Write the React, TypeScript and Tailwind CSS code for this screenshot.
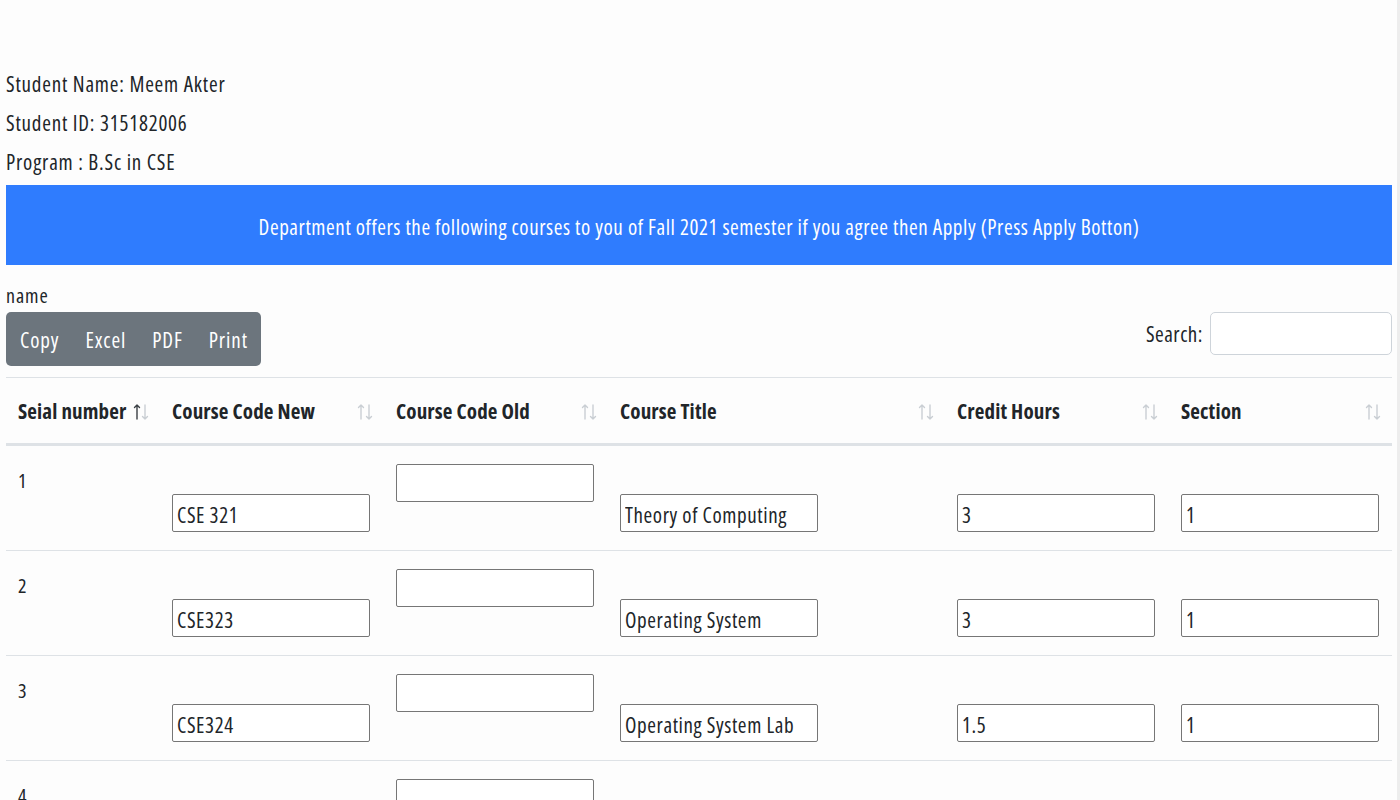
import React from "react";

type Row = { n: string; newCode: string; title: string; credit: string; section: string };

const rows: Row[] = [
  { n: "1", newCode: "CSE 321", title: "Theory of Computing", credit: "3", section: "1" },
  { n: "2", newCode: "CSE323", title: "Operating System", credit: "3", section: "1" },
  { n: "3", newCode: "CSE324", title: "Operating System Lab", credit: "1.5", section: "1" },
  { n: "4", newCode: "CSE325", title: "Computer Networks", credit: "3", section: "1" },
];

function SortIcon({ active }: { active?: boolean }) {
  return (
    <svg width="18" height="20" viewBox="0 0 18 20" className="shrink-0">
      <g strokeWidth="1.4" fill="none" strokeLinecap="round" strokeLinejoin="round">
        <path d="M5 17V3M2.5 5.5L5 3l2.5 2.5" stroke={active ? "#3a3f44" : "#c9ced3"} />
        <path d="M13 3v14M10.5 14.5L13 17l2.5-2.5" stroke="#c9ced3" />
      </g>
    </svg>
  );
}

function Field({ value }: { value: string }) {
  return (
    <input
      defaultValue={value}
      className="block w-[198px] h-[38px] border border-[#767676] rounded-[2px] bg-white px-[4px] pt-[4px] text-[21px] tracking-[0.6px] text-[#212529] outline-none [font-stretch:75%]"
    />
  );
}

const headers = [
  { label: "Seial number", w: "w-[154px]", active: true, tight: true },
  { label: "Course Code New", w: "w-[224px]" },
  { label: "Course Code Old", w: "w-[224px]" },
  { label: "Course Title", w: "w-[337px]" },
  { label: "Credit Hours", w: "w-[224px]" },
  { label: "Section", w: "w-[223px]" },
];

export default function App() {
  return (
    <div
      className="min-h-[800px] w-full bg-[#fdfdfd] text-[#212529] pl-[6px] pr-[5px] pt-[65px] border-r-[3px] border-[#ededed] overflow-hidden [font-stretch:75%]"
      style={{ fontFamily: '"Open Sans", "Noto Sans", sans-serif' }}
    >
      <div className="text-[21px] leading-[39px] tracking-[0.8px]">Student Name: Meem Akter</div>
      <div className="text-[21px] leading-[39px] tracking-[0.8px]">Student ID: 315182006</div>
      <div className="text-[21px] leading-[39px] tracking-[0.8px]">Program : B.Sc in CSE</div>

      <div className="mt-[3px] h-[80px] pt-[5px] bg-[#2f7cfe] flex items-center justify-center text-white text-[21px] tracking-[0.58px]">
        Department offers the following courses to you of Fall 2021 semester if you agree then Apply (Press Apply Botton)
      </div>

      <div className="mt-[19px] text-[20px] leading-[24px] tracking-[0.9px]">name</div>
      <div className="mt-[4px] flex items-start justify-between">
        <div className="flex h-[54px] rounded-[5px] bg-[#6c757d] text-white text-[21px] tracking-[0.9px] pl-px">
          {["Copy", "Excel", "PDF", "Print"].map((b) => (
            <button key={b} className="px-[13px] pt-[3px] h-full flex items-center">
              {b}
            </button>
          ))}
        </div>
        <div className="flex items-center gap-[7px]">
          <span className="text-[21px] pt-[2px] tracking-[0.5px]">Search:</span>
          <input className="w-[182px] h-[43px] rounded-[5px] border border-[#ced4da] bg-white outline-none" />
        </div>
      </div>

      <table className="mt-[11px] w-[1386px] border-collapse table-fixed">
        <thead>
          <tr className="border-t border-[#dee2e6] border-b-[3px] border-b-[#dee2e6]">
            {headers.map((h) => (
              <th key={h.label} className={`${h.w} h-[67px] pl-[12px] pr-[10px] pt-[3px] text-left font-bold text-[21px] tracking-[0.15px]`}>
                <div className={`flex items-center ${h.tight ? "gap-[6px]" : "justify-between"}`}>
                  <span className="whitespace-nowrap">{h.label}</span>
                  <SortIcon active={h.active} />
                </div>
              </th>
            ))}
          </tr>
        </thead>
        <tbody>
          {rows.map((r) => (
            <tr key={r.n} className="border-b border-[#dee2e6] align-top">
              <td className="pl-[12px] py-[18px] text-[20px] leading-[34px]">{r.n}</td>
              <td className="pl-[12px] py-[18px]">
                <div className="h-[30px]" />
                <Field value={r.newCode} />
              </td>
              <td className="pl-[12px] py-[18px]">
                <Field value="" />
              </td>
              <td className="pl-[12px] py-[18px]">
                <div className="h-[30px]" />
                <Field value={r.title} />
              </td>
              <td className="pl-[12px] py-[18px]">
                <div className="h-[30px]" />
                <Field value={r.credit} />
              </td>
              <td className="pl-[12px] py-[18px]">
                <div className="h-[30px]" />
                <Field value={r.section} />
              </td>
            </tr>
          ))}
        </tbody>
      </table>
    </div>
  );
}
